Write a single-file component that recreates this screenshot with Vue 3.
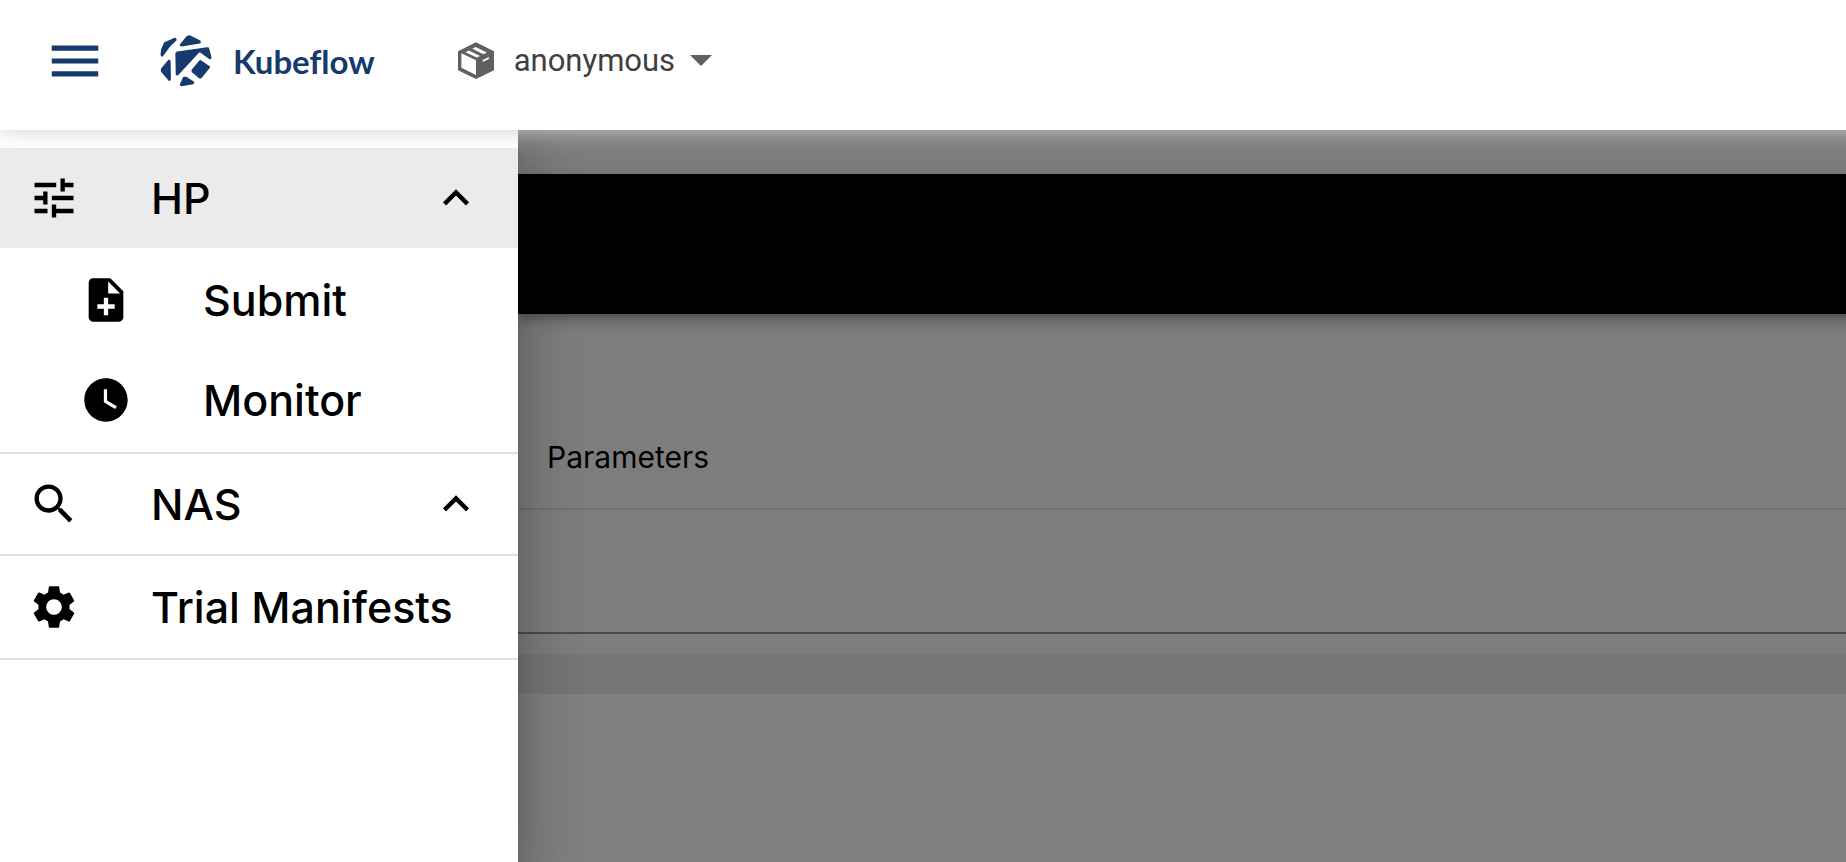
<script setup>
const icons = {
  tune: 'M3 17v2h6v-2H3zM3 5v2h10V5H3zm10 16v-2h8v-2h-8v-2h-2v6h2zM7 9v2H3v2h4v2h2V9H7zm14 4v-2H11v2h10zm-6-4h2V7h4V5h-4V3h-2v6z',
  noteAdd: 'M14 2H6c-1.1 0-1.99.9-1.99 2L4 20c0 1.1.89 2 1.99 2H18c1.1 0 2-.9 2-2V8l-6-6zm2 14h-3v3h-2v-3H8v-2h3v-3h2v3h3v2zm-3-7V3.500L18.500 9H13z',
  clock: 'M12 2C6.480 2 2 6.480 2 12s4.480 10 10 10 10-4.480 10-10S17.520 2 12 2zm4.200 14.200L11 13V7h1.500v5.200l4.500 2.700-.8 1.300z',
  search: 'M15.500 14h-.79l-.28-.27C15.410 12.590 16 11.110 16 9.500 16 5.910 13.090 3 9.500 3S3 5.910 3 9.500 5.910 16 9.500 16c1.610 0 3.090-.59 4.230-1.570l.27.28v.79l5 4.990L20.490 19l-4.990-5zm-6 0C7.010 14 5 11.990 5 9.500S7.010 5 9.500 5 14 7.010 14 9.500 11.990 14 9.500 14z',
  gear: 'M19.140 12.940c.04-.3.06-.61.06-.94 0-.32-.02-.64-.07-.94l2.030-1.580c.18-.14.23-.41.12-.61l-1.920-3.320c-.12-.22-.37-.29-.59-.22l-2.390.96c-.5-.38-1.030-.7-1.620-.94l-.36-2.540c-.04-.24-.24-.41-.48-.41h-3.840c-.24 0-.43.17-.47.41l-.36 2.540c-.59.24-1.130.57-1.620.94l-2.390-.96c-.22-.08-.47 0-.59.22L2.740 8.870c-.12.21-.08.47.12.61l2.030 1.580c-.05.3-.09.63-.09.94s.02.64.07.94l-2.030 1.580c-.18.14-.23.41-.12.61l1.920 3.320c.12.22.37.29.59.22l2.390-.96c.5.38 1.030.7 1.620.94l.36 2.540c.05.24.24.41.48.41h3.840c.24 0 .44-.17.47-.41l.36-2.540c.59-.24 1.130-.56 1.620-.94l2.390.96c.22.08.47 0 .59-.22l1.920-3.320c.12-.22.07-.47-.12-.61l-2.010-1.580zM12 15.600c-1.980 0-3.600-1.620-3.600-3.600s1.620-3.600 3.600-3.600 3.600 1.620 3.600 3.600-1.620 3.600-3.600 3.600z',
  less: 'M12 8l-6 6 1.410 1.410L12 10.830l4.590 4.580L18 14z'
}

const groups = [
  {
    label: 'HP',
    icon: icons.tune,
    active: true,
    expandable: true,
    children: [
      { label: 'Submit', icon: icons.noteAdd },
      { label: 'Monitor', icon: icons.clock }
    ]
  },
  { label: 'NAS', icon: icons.search, expandable: true, children: [] },
  { label: 'Trial Manifests', icon: icons.gear, children: [] }
]
</script>

<template>
  <div class="page">
    <header class="topbar">
      <button class="menu" type="button" aria-label="Menu">
        <svg viewBox="0 0 24 24"><path d="M3 18h18v-2H3v2zm0-5h18v-2H3v2zm0-7v2h18V6H3z" /></svg>
      </button>
      <a class="brand" href="#">
        <svg viewBox="393 44 153 154" aria-hidden="true">
          <path d="M397 102 399 86 407 68 437 55 439 58 421 75 399 105z" />
          <path d="M454 73 474 49 481 48 510 63 510 66 456 75z" />
          <path d="M441 98 444 96 533 83 535 84 542 110 541 113 511 92 507 93 444 161 442 160z" />
          <path d="M512 121 538 139 514 169 510 170 489 152 489 148z" />
          <path d="M419 120 421 122 422 174 420 177 398 151 398 145z" />
          <path d="M463 171 470 171 491 184 490 187 456 193 454 191z" />
        </svg>
        <span>Kubeflow</span>
      </a>
      <button class="namespace" type="button">
        <svg class="cube" viewBox="52 65 106 109" aria-hidden="true">
          <path class="solid" d="M105 66 158 92V148L105 174 52 148V92z" />
          <path class="cut" d="M62 98 105 119V162L62 141zM74 95 84 90 117 106 107 111zM94 85 104 80 137 96 127 101zM125 118 143 109V115L125 124z" />
        </svg>
        <span>anonymous</span>
        <svg class="caret" viewBox="0 0 22 11" aria-hidden="true"><path d="M0 0h22L11 11z" /></svg>
      </button>
    </header>

    <div class="body">
      <nav class="drawer" aria-label="Katib">
        <section v-for="group in groups" :key="group.label" class="group">
          <button class="item" :class="{ active: group.active }" type="button">
            <svg class="icon" viewBox="0 0 24 24" aria-hidden="true"><path :d="group.icon" /></svg>
            <span class="label">{{ group.label }}</span>
            <svg v-if="group.expandable" class="icon" viewBox="0 0 24 24" aria-hidden="true"><path :d="icons.less" /></svg>
          </button>
          <div v-if="group.children.length" class="children">
            <a v-for="child in group.children" :key="child.label" class="item nested" href="#">
              <svg class="icon" viewBox="0 0 24 24" aria-hidden="true"><path :d="child.icon" /></svg>
              <span class="label">{{ child.label }}</span>
            </a>
          </div>
        </section>
      </nav>

      <main class="content">
        <div class="appbar"></div>
        <div class="tabs">
          <button class="tab" type="button">Parameters</button>
        </div>
        <div class="field"></div>
        <div class="strip"></div>
        <div class="sheet"></div>
        <div class="scrim"></div>
      </main>
    </div>
  </div>
</template>

<style>
body {
  margin: 0;
}
</style>

<style scoped>
.page {
  display: flex;
  flex-direction: column;
  min-height: 100vh;
  overflow: hidden;
  background: #fff;
  font-family: Inter, "Liberation Sans", sans-serif;
}

button {
  border: 0;
  padding: 0;
  background: none;
  font: inherit;
  color: inherit;
  cursor: pointer;
}

a {
  color: inherit;
  text-decoration: none;
}

svg {
  display: block;
  flex: none;
  fill: currentColor;
}

/* Bars bleed past the right edge so that their shadows stay even. */
.topbar,
.appbar {
  margin-right: -40px;
}

.topbar {
  position: relative;
  z-index: 3;
  display: flex;
  align-items: center;
  box-sizing: border-box;
  height: 130px;
  padding: 0 44px 9px;
  background: #fff;
  box-shadow: 0 0 20px #cccdd2;
  color: #173a6d;
}

.menu svg {
  width: 62px;
  height: 62px;
}

.brand {
  display: flex;
  align-items: center;
  gap: 21px;
  margin-left: 54px;
  font: 700 33px/40px Lato, sans-serif;
  font-variant-ligatures: none;
}

.brand svg {
  width: 52px;
  height: 52px;
  stroke: currentColor;
  stroke-width: 6;
  stroke-linejoin: round;
}

.namespace {
  display: flex;
  align-items: center;
  margin-left: 83px;
  color: #3c4043;
  font: 400 31px/40px Roboto, sans-serif;
}

.cube {
  width: 36px;
  height: 37px;
  margin-right: 20px;
}

.solid,
.caret {
  fill: #5f6062;
}

.cut {
  fill: #fff;
}

.caret {
  width: 22px;
  height: 11px;
  margin-left: 15px;
}

.body {
  display: flex;
  flex: 1;
}

.drawer {
  position: relative;
  z-index: 2;
  box-sizing: border-box;
  flex: none;
  width: 518px;
  padding-top: 18px;
  background: #fff;
  box-shadow:
    0 16px 20px -10px rgba(0, 0, 0, 0.2),
    0 32px 48px 4px rgba(0, 0, 0, 0.14),
    0 12px 60px 10px rgba(0, 0, 0, 0.12);
}

.group {
  border-bottom: 2px solid #e0e0e0;
}

.children {
  padding: 2px 0;
}

.item {
  display: flex;
  align-items: center;
  gap: 71px;
  box-sizing: border-box;
  width: 100%;
  height: 100px;
  padding: 0 36px 0 28px;
  color: #000;
  font-size: 43px;
  font-weight: 500;
  line-height: 60px;
  text-align: left;
  white-space: nowrap;
}

.group:last-child .item {
  height: 102px;
}

.active {
  background: #ebebeb;
}

.nested {
  padding-left: 80px;
}

.icon {
  width: 52px;
  height: 52px;
}

.label {
  flex: 1;
}

.content {
  position: relative;
  display: flex;
  flex: 1;
  flex-direction: column;
  min-width: 0;
  padding-top: 44px;
  background: #fafafa;
}

.appbar {
  height: 140px;
  background: #000;
  box-shadow:
    0 4px 8px -2px rgba(0, 0, 0, 0.2),
    0 8px 10px rgba(0, 0, 0, 0.14),
    0 2px 20px rgba(0, 0, 0, 0.12);
}

.tabs {
  box-sizing: border-box;
  height: 196px;
  padding: 93px 29px 0;
  border-bottom: 2px solid #e2e2e2;
}

.tab {
  color: #000;
  font-size: 30px;
  line-height: 100px;
}

.field {
  box-sizing: border-box;
  height: 124px;
  border-bottom: 2px solid #969696;
}

.strip {
  height: 40px;
  margin-top: 20px;
  background: #ebebeb;
}

.sheet {
  flex: 1;
  background: #fff;
}

.scrim {
  position: absolute;
  inset: 0;
  background: rgba(0, 0, 0, 0.5);
}
</style>
